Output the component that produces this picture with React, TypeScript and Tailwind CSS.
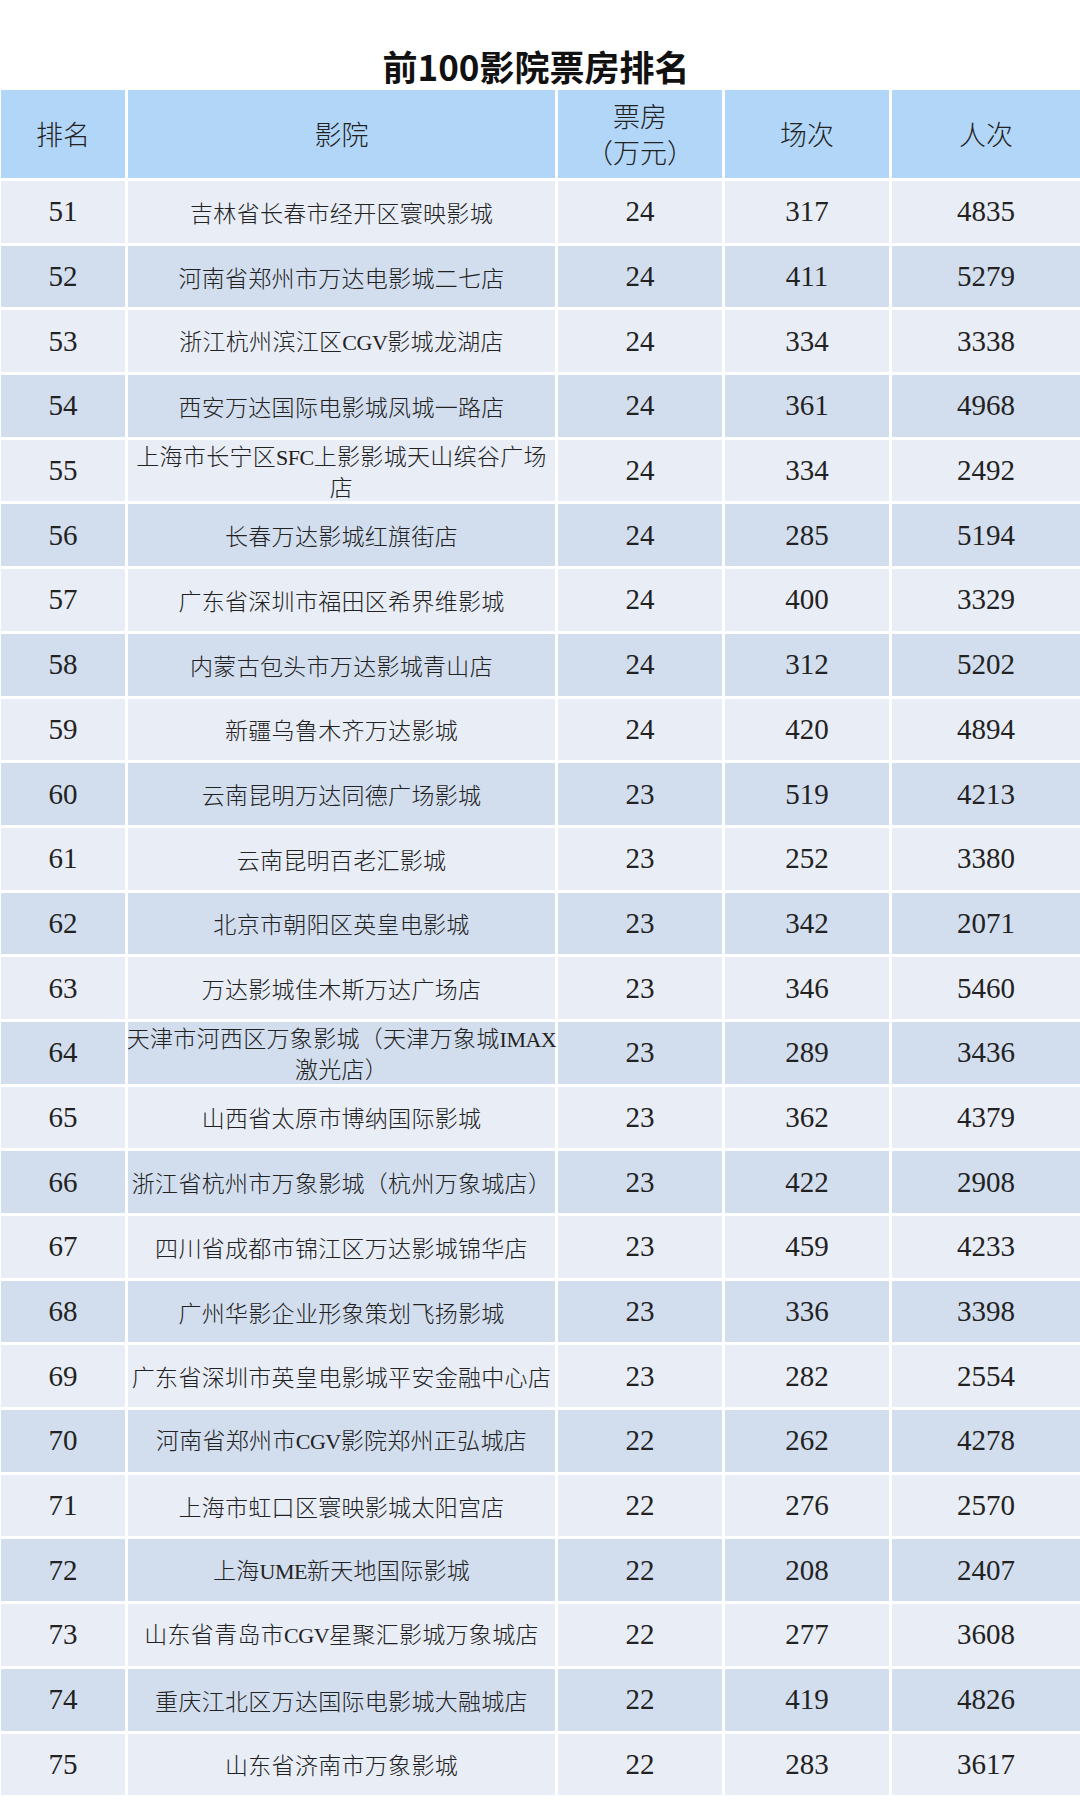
import React from "react";

const rows: [number, React.ReactNode, number, number, number][] = [
  [51, "吉林省长春市经开区寰映影城", 24, 317, 4835],
  [52, "河南省郑州市万达电影城二七店", 24, 411, 5279],
  [53, <>浙江杭州滨江区<L>CGV</L>影城龙湖店</>, 24, 334, 3338],
  [54, "西安万达国际电影城凤城一路店", 24, 361, 4968],
  [55, <>上海市长宁区<L>SFC</L>上影影城天山缤谷广场<br />店</>, 24, 334, 2492],
  [56, "长春万达影城红旗街店", 24, 285, 5194],
  [57, "广东省深圳市福田区希界维影城", 24, 400, 3329],
  [58, "内蒙古包头市万达影城青山店", 24, 312, 5202],
  [59, "新疆乌鲁木齐万达影城", 24, 420, 4894],
  [60, "云南昆明万达同德广场影城", 23, 519, 4213],
  [61, "云南昆明百老汇影城", 23, 252, 3380],
  [62, "北京市朝阳区英皇电影城", 23, 342, 2071],
  [63, "万达影城佳木斯万达广场店", 23, 346, 5460],
  [64, <>天津市河西区万象影城（天津万象城<L>IMAX</L><br />激光店）</>, 23, 289, 3436],
  [65, "山西省太原市博纳国际影城", 23, 362, 4379],
  [66, "浙江省杭州市万象影城（杭州万象城店）", 23, 422, 2908],
  [67, "四川省成都市锦江区万达影城锦华店", 23, 459, 4233],
  [68, "广州华影企业形象策划飞扬影城", 23, 336, 3398],
  [69, "广东省深圳市英皇电影城平安金融中心店", 23, 282, 2554],
  [70, <>河南省郑州市<L>CGV</L>影院郑州正弘城店</>, 22, 262, 4278],
  [71, "上海市虹口区寰映影城太阳宫店", 22, 276, 2570],
  [72, <>上海<L>UME</L>新天地国际影城</>, 22, 208, 2407],
  [73, <>山东省青岛市<L>CGV</L>星聚汇影城万象城店</>, 22, 277, 3608],
  [74, "重庆江北区万达国际电影城大融城店", 22, 419, 4826],
  [75, "山东省济南市万象影城", 22, 283, 3617],
];

function L({ children }: { children: React.ReactNode }) {
  return (
    <span className="font-['Liberation_Serif',serif] text-[22px] tracking-[-0.5px] font-normal">
      {children}
    </span>
  );
}

const cjk = "font-['Noto_Sans_CJK_SC',sans-serif] font-light";
const num = "font-['Liberation_Serif','Noto_Sans_CJK_SC',serif] text-[29px] leading-none";

export default function App() {
  return (
    <div className="w-[1080px] h-[1800px] overflow-hidden bg-white text-[#222]">
      <div className="h-[90px] flex items-center justify-center pt-[2px]">
        <h1 className="font-['Noto_Sans_CJK_SC',sans-serif] font-bold text-[35px] leading-none text-[#111] ml-[-8px] mt-[38px]">
          前100影院票房排名
        </h1>
      </div>
      <div className="flex flex-col gap-[3px] pl-[1px]">
        <div className="grid grid-cols-[124px_427px_164px_164px_188px] gap-[3px] h-[88px]">
          <div className={`bg-[#b2d6f8] flex items-center justify-center text-[27px] ${cjk}`}>排名</div>
          <div className={`bg-[#b2d6f8] flex items-center justify-center text-[27px] ${cjk}`}>影院</div>
          <div className={`bg-[#b2d6f8] flex flex-col items-center justify-center text-[27px] leading-[36px] ${cjk}`}>
            <span>票房</span>
            <span>（万元）</span>
          </div>
          <div className={`bg-[#b2d6f8] flex items-center justify-center text-[27px] ${cjk}`}>场次</div>
          <div className={`bg-[#b2d6f8] flex items-center justify-center text-[27px] ${cjk}`}>人次</div>
        </div>
        {rows.map(([rank, name, box, shows, people], i) => {
          const bg = i % 2 === 0 ? "bg-[#e9edf6]" : "bg-[#d2deee]";
          return (
            <div key={rank} className="grid grid-cols-[124px_427px_164px_164px_188px] gap-[3px] h-[61.7px]">
              <div className={`${bg} flex items-center justify-center`}>
                <span className={num}>{rank}</span>
              </div>
              <div className={`${bg} flex items-center justify-center text-center text-[23px] leading-[28px] tracking-[0.3px] whitespace-nowrap ${cjk}`}>
                <span>{name}</span>
              </div>
              <div className={`${bg} flex items-center justify-center`}>
                <span className={num}>{box}</span>
              </div>
              <div className={`${bg} flex items-center justify-center`}>
                <span className={num}>{shows}</span>
              </div>
              <div className={`${bg} flex items-center justify-center`}>
                <span className={num}>{people}</span>
              </div>
            </div>
          );
        })}
      </div>
    </div>
  );
}
